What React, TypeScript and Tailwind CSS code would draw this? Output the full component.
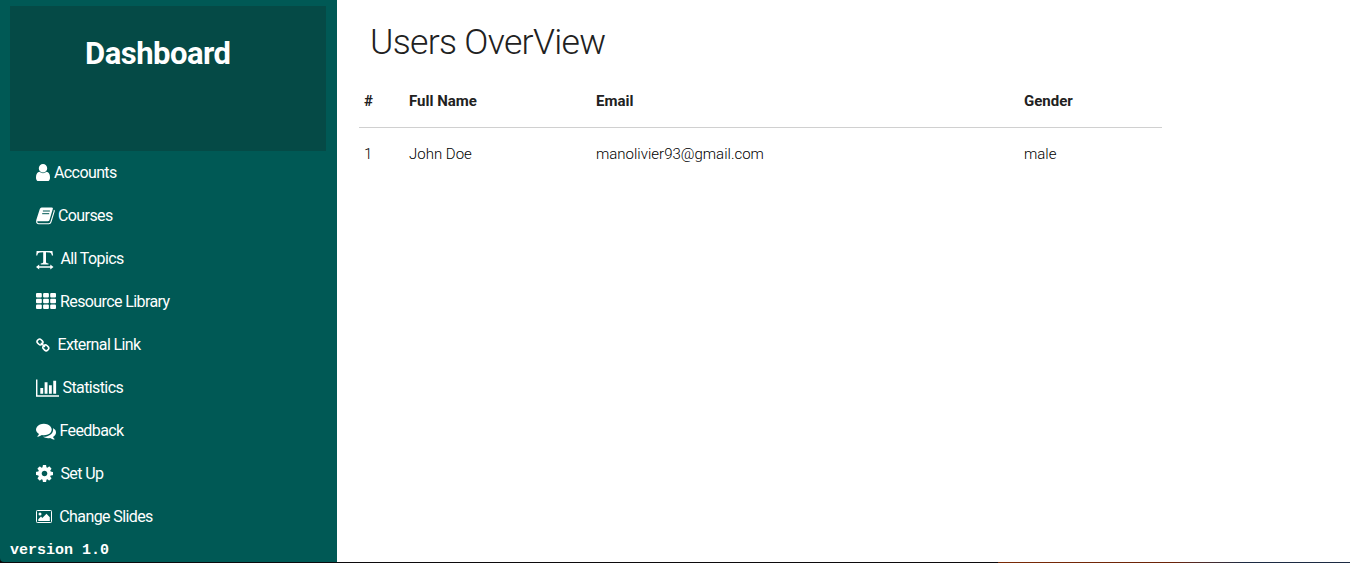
import type { ReactNode } from "react";

const UserIcon = () => (
  <svg className="w-[14px] h-[17px]" viewBox="256 128 1280 1536" fill="currentColor" preserveAspectRatio="none">
    <path d="M1536 1399q0 109-62.5 187t-150.5 78h-854q-88 0-150.5-78t-62.5-187q0-85 8.5-160.5t31.5-152 58.5-131 94-89 134.5-34.5q131 128 313 128t313-128q76 0 134.5 34.5t94 89 58.5 131 31.5 152 8.5 160.5zm-256-887q0 159-112.5 271.5t-271.5 112.5-271.5-112.5-112.5-271.5 112.5-271.5 271.5-112.5 271.5 112.5 112.5 271.5z" />
  </svg>
);

const BookIcon = () => (
  <svg className="w-[19px] h-[18px]" viewBox="0 0 19 18" fill="none">
    <path d="M5.600 .4H15.600q1.700 0 1.200 1.600L13.500 13q-.4 1.300-1.800 1.300H2.300q-1.500 0-1.900 1Q-.1 13.800.600 12L3.800 2Q4.300.4 5.600.4z" fill="currentColor" />
    <path d="M6.900 4h7M6.200 6.700h7" stroke="#005955" strokeWidth="1" />
    <path d="M17.900 3.200q.5.500.2 1.400L14.900 15q-.5 1.700-2.100 1.700H2.700Q.8 16.700.6 14.500" stroke="currentColor" strokeWidth="1.100" />
  </svg>
);

const TextWidthIcon = () => (
  <svg className="mt-0.5 w-[18px] h-[20px]" viewBox="0 0 18 20" fill="currentColor">
    <path d="M.6 1h15.800l.7 4.600h-1.200c-.5-2.500-1-3.100-2.500-3.200l-3.400-.1v9.800c0 1 .5 1.200 2.500 1.500v1H4.700v-1c2-.3 2.500-.5 2.500-1.500V2.300l-3.300.1C2.300 2.500 1.700 3.200 1.300 5.600H.2z" />
    <path d="M0 17l3.200-2.600v1.800h11.100v-1.800l3.200 2.600-3.200 2.600v-1.800H3.200v1.800z" />
  </svg>
);

const GridIcon = () => (
  <svg className="-mt-px w-[20px] h-[16px]" viewBox="0 0 20 16" fill="currentColor">
    {[0, 5.8, 11.6].map((y) =>
      [0, 7.1, 14.2].map((x) => <rect key={`${x}-${y}`} x={x} y={y} width="5.8" height="4.4" rx="1" />),
    )}
  </svg>
);

const LinkIcon = () => (
  <svg className="w-[14px] h-[14px]" viewBox="0 0 14 14" fill="none" stroke="currentColor" strokeWidth="1.6" strokeLinecap="round">
    <rect x="-2.9" y="-2.4" width="5.8" height="4.8" rx="2.1" transform="translate(4 4) rotate(45)" />
    <rect x="-2.9" y="-2.4" width="5.8" height="4.8" rx="2.1" transform="translate(9.8 9.8) rotate(45)" />
    <path d="M5.3 5.3l3.2 3.2" />
  </svg>
);

const ChartIcon = () => (
  <svg className="w-[23px] h-[18px]" viewBox="0 96 2048 1600" fill="currentColor">
    <path d="M640 896v512h-256v-512h256zm384-512v1024h-256v-1024h256zm1024 1152v128h-2048v-1536h128v1408h1920zm-640-896v768h-256v-768h256zm384-384v1152h-256v-1152h256z" />
  </svg>
);

const CommentsIcon = () => (
  <svg className="w-[20px] h-[20px]" viewBox="0 0 1792 1792" fill="currentColor">
    <path d="M1408 768q0 139-94 257t-256.5 186.5-353.5 68.5q-86 0-176-16-124 88-278 128-36 9-86 16h-3q-11 0-20.5-8t-11.5-21q-1-3-1-6.5t.5-6.5 2-6l2.5-5 3.5-5.5 4-5 4.5-5 4-4.5q5-6 23-25t26-29.5 22.5-29 25-38.5 20.5-44q-124-72-195-177t-71-224q0-139 94-257t256.5-186.5 353.5-68.5 353.5 68.5 256.5 186.5 94 257zm384 256q0 120-71 224.5t-195 176.5q10 24 20.5 44t25 38.5 22.5 29 26 29.5 23 25q1 1 4 4.5t4.5 5 4 5 3.5 5.5l2.5 5 2 6 .5 6.5-1 6.5q-3 14-13 22t-22 7q-50-7-86-16-154-40-278-128-90 16-176 16-271 0-472-132 58 4 88 4 161 0 309-45t264-129q125-92 192-212t67-254q0-77-23-152 129 71 204 178t75 230z" />
  </svg>
);

const CogIcon = () => (
  <svg className="w-[17px] h-[17px]" viewBox="128 128 1536 1536" fill="currentColor">
    <path d="M1152 896q0-106-75-181t-181-75-181 75-75 181 75 181 181 75 181-75 75-181zm512-109v222q0 12-8 23t-20 13l-185 28q-19 54-39 91 35 50 107 138 10 12 10 25t-9 23q-27 37-99 108t-94 71q-12 0-26-9l-138-108q-44 23-91 38-16 136-29 186-7 28-36 28h-222q-14 0-24.5-8.5t-11.5-21.5l-28-184q-49-16-90-37l-141 107q-10 9-25 9-14 0-25-11-126-114-165-168-7-10-7-23 0-12 8-23 15-21 51-66.5t54-70.5q-27-50-41-99l-183-27q-13-2-21-12.5t-8-23.5v-222q0-12 8-23t19-13l186-28q14-46 39-92-40-57-107-138-10-12-10-24 0-10 9-23 26-36 98.5-107.5t94.5-71.5q13 0 26 10l138 107q44-23 91-38 16-136 29-186 7-28 36-28h222q14 0 24.5 8.5t11.5 21.5l28 184q49 16 90 37l142-107q9-9 24-9 13 0 25 10 129 119 165 170 7 8 7 22 0 12-8 23-15 21-51 66.5t-54 70.5q26 50 41 98l183 28q13 2 21 12.5t8 23.5z" />
  </svg>
);

const PictureIcon = () => (
  <svg className="w-[17px] h-[14px]" viewBox="0 0 17 14" fill="currentColor">
    <rect x=".5" y=".5" width="15" height="12" rx=".8" fill="none" stroke="currentColor" />
    <circle cx="4" cy="4" r="1.5" />
    <path d="M2.3 11V9.2L5 6.6l1.3 1.3 4.2-4.1 3.3 3.4V11z" />
  </svg>
);

type Item = { label: string; icon: ReactNode; iconBox: string };

const items: Item[] = [
  { label: "Accounts", icon: <UserIcon />, iconBox: "w-[18px]" },
  { label: "Courses", icon: <BookIcon />, iconBox: "w-[22px]" },
  { label: "All Topics", icon: <TextWidthIcon />, iconBox: "w-[24.4px]" },
  { label: "Resource Library", icon: <GridIcon />, iconBox: "w-[24px]" },
  { label: "External Link", icon: <LinkIcon />, iconBox: "w-[21.4px]" },
  { label: "Statistics", icon: <ChartIcon />, iconBox: "w-[26.5px]" },
  { label: "Feedback", icon: <CommentsIcon />, iconBox: "w-[23.5px]" },
  { label: "Set Up", icon: <CogIcon />, iconBox: "w-[24.4px]" },
  { label: "Change Slides", icon: <PictureIcon />, iconBox: "w-[23.3px]" },
];

export default function App() {
  return (
    <div className="flex h-[563px] w-[1350px] flex-col overflow-hidden bg-white font-['Roboto',sans-serif] text-[15px] text-[#212121]">
      <div className="flex h-[562px] bg-linear-to-r from-[#0c0809] from-1% to-white to-1%">
        <aside className="flex w-[337px] shrink-0 flex-col rounded-bl-[4px] bg-[#005955] text-white">
          <header className="mt-1.5 ml-2.5 h-[145px] w-[316px] bg-[#054a46] pt-[28px] pl-[75px]">
            <h1 className="text-[31px] leading-10 font-bold tracking-[-0.5px]">Dashboard</h1>
          </header>
          <nav>
            {items.map((item) => (
              <a key={item.label} className="flex h-[43px] items-center pl-9">
                <span className={`flex shrink-0 items-center ${item.iconBox}`}>{item.icon}</span>
                <span className="pt-px text-[16px] tracking-[-0.6px] whitespace-nowrap">{item.label}</span>
              </a>
            ))}
          </nav>
          <p className="mt-1 pl-2.5 font-['Courier_New','Liberation_Mono',monospace] text-[15px] leading-[18px] font-bold">version 1.0</p>
        </aside>
        <main className="pl-[22px]">
          <h2 className="pt-[18px] pl-[11px] text-[35.6px] leading-[48px] font-light tracking-[-0.7px]">Users OverView</h2>
          <table className="mt-2 w-[803px] table-fixed border-collapse text-left">
            <colgroup>
              <col className="w-[45px]" />
              <col className="w-[187px]" />
              <col className="w-[428px]" />
              <col />
            </colgroup>
            <thead>
              <tr className="h-[53px] border-b border-[#d0d0d0] [&>th]:pt-px [&>th]:pl-[5px] [&>th]:font-bold">
                <th>#</th>
                <th>Full Name</th>
                <th>Email</th>
                <th>Gender</th>
              </tr>
            </thead>
            <tbody>
              <tr className="h-[53px] font-light text-black [&>td]:pl-[5px]">
                <td>1</td>
                <td>John Doe</td>
                <td>manolivier93@gmail.com</td>
                <td>male</td>
              </tr>
            </tbody>
          </table>
        </main>
      </div>
      <div className="h-px bg-[#0c0a0c]">
        <div className="ml-[998px] h-px bg-linear-to-r from-[#7a2a06] via-[#6a2208] via-50% to-[#1c2a42] to-70%" />
      </div>
    </div>
  );
}
